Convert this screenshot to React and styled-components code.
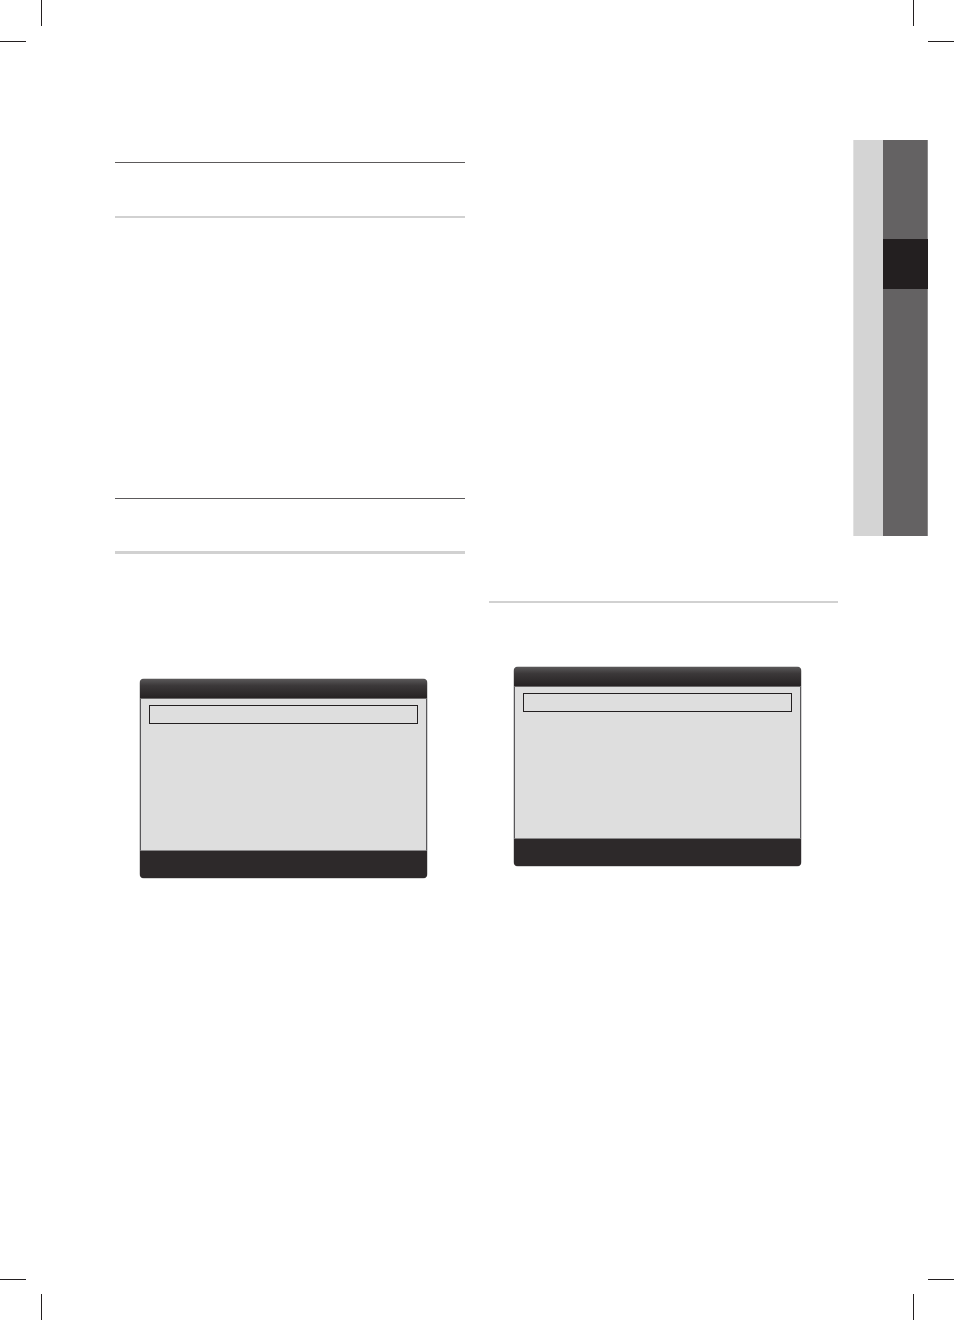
import React from 'react';
import styled, { createGlobalStyle } from 'styled-components';

const GlobalStyle = createGlobalStyle`
  html, body {
    margin: 0;
    padding: 0;
    background: #ffffff;
    font-family: "Liberation Sans", Arial, sans-serif;
  }
`;

const Page = styled.div`
  position: relative;
  width: 954px;
  height: 1320px;
  background: #ffffff;
  overflow: hidden;
`;

// printer's crop marks at the page corners
const Mark = styled.div`
  position: absolute;
  background: #231f20;
  ${({ $dir }) => ($dir === 'v' ? 'width: 1px; height: 26px;' : 'width: 26px; height: 1px;')}
`;

const Spread = styled.div`
  display: flex;
  align-items: flex-start;
  padding: 140px 0 0 115px;
`;

const Column = styled.div`
  display: flex;
  flex-direction: column;
  width: ${({ $width }) => $width}px;
  margin-top: ${({ $top }) => $top || 0}px;
  margin-right: ${({ $right }) => $right || 0}px;
`;

const Rule = styled.div`
  height: ${({ $size }) => $size}px;
  background: ${({ $dark }) => ($dark ? '#5c5a5b' : '#d1d1d1')};
  margin-top: ${({ $gap }) => $gap || 0}px;
`;

const Screen = styled.div`
  display: flex;
  flex-direction: column;
  width: 287px;
  height: 199px;
  margin-top: ${({ $gap }) => $gap}px;
  margin-left: 25px;
  border-radius: 4px;
  overflow: hidden;
  background: #2d292a;
  box-shadow: 0 0 0 0.5px rgba(0, 0, 0, 0.35);
`;

const ScreenHead = styled.div`
  height: 19px;
  background: linear-gradient(#5a5859 0%, #3b3839 35%, #262223 100%);
  border-bottom: 1px solid #6a6869;
`;

const ScreenBody = styled.div`
  flex: 1;
  background: #dedede;
  border-left: 1px solid #58575a;
  border-right: 1px solid #58575a;
  border-bottom: 1px solid #8a898a;
  padding: 6px 8px 0 8px;
`;

const Field = styled.div`
  height: 17px;
  border: 1px solid #231f20;
`;

const ScreenFoot = styled.div`
  height: 27px;
  background: #2d292a;
`;

const Tab = styled.div`
  display: flex;
  height: 396px;
`;

const TabLight = styled.div`
  width: 30px;
  background: #d4d4d4;
  border-left: 1px solid #e2e2e2;
  box-sizing: border-box;
`;

const TabDark = styled.div`
  width: 45px;
  display: flex;
  flex-direction: column;
  background: #646263;
  border-right: 1px solid #8a8889;
  box-sizing: border-box;
`;

const TabMark = styled.div`
  height: 50px;
  margin-top: 99px;
  margin-right: -1px;
  background: #231f20;
`;

function Dialog({ gap }) {
  return (
    <Screen $gap={gap}>
      <ScreenHead />
      <ScreenBody>
        <Field />
      </ScreenBody>
      <ScreenFoot />
    </Screen>
  );
}

export default function App() {
  return (
    <>
      <GlobalStyle />
      <Page>
        <Mark $dir="v" style={{ left: 41, top: 0 }} />
        <Mark $dir="h" style={{ left: 0, top: 41 }} />
        <Mark $dir="v" style={{ left: 913, top: 0 }} />
        <Mark $dir="h" style={{ left: 928, top: 41 }} />
        <Mark $dir="h" style={{ left: 0, top: 1279 }} />
        <Mark $dir="v" style={{ left: 41, top: 1294 }} />
        <Mark $dir="h" style={{ left: 928, top: 1279 }} />
        <Mark $dir="v" style={{ left: 913, top: 1294 }} />

        <Spread>
          <Column $width={350} $top={22} $right={24}>
            <Rule $dark $size={1} />
            <Rule $size={2} $gap={53} />
            <Rule $dark $size={1} $gap={280} />
            <Rule $size={3} $gap={52} />
            <Dialog gap={125} />
          </Column>

          <Column $width={349} $top={461} $right={15}>
            <Rule $size={2} />
            <Dialog gap={64} />
          </Column>

          <Tab>
            <TabLight />
            <TabDark>
              <TabMark />
            </TabDark>
          </Tab>
        </Spread>
      </Page>
    </>
  );
}
